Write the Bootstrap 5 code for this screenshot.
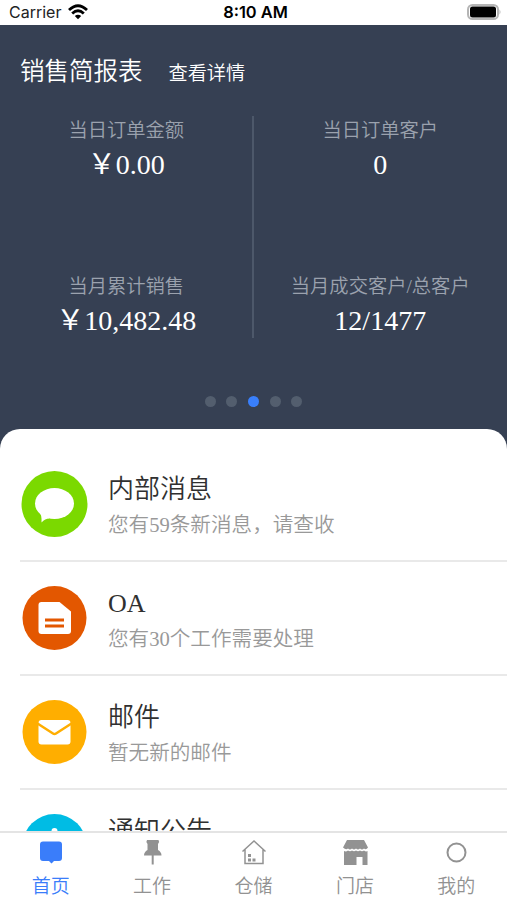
<!DOCTYPE html>
<html lang="zh-CN">
<head>
<meta charset="utf-8">
<meta name="viewport" content="width=device-width, initial-scale=1">
<title>首页</title>
<link href="https://cdn.jsdelivr.net/npm/bootstrap@5.3.0/dist/css/bootstrap.min.css" rel="stylesheet">
<style>
body{font-family:"Liberation Serif","Noto Sans CJK SC",sans-serif;font-weight:350;height:900px;line-height:1}
.statusbar{height:25px;font-family:Inter,"Liberation Sans",sans-serif;font-weight:400;color:#222;padding:0 5px 1px 9px;font-size:16px}
.statusbar>*{flex:1 1 0}
.carrier{gap:7px}
.clock{font-weight:600;font-size:16.4px;color:#000}
.report{background:#364053;height:425px;color:#fff;flex:none}
.report-head{height:91px;padding:3px 0 0 20px;gap:26px}
.report-title{font-size:24.5px;line-height:30px}
.report-link{font-size:19.2px;line-height:30px;padding-top:3px;color:#fff}
.stats{height:222px}
.stats .half{padding-top:1px}
.stats .half:first-child{border-right:2px solid #4d586a;padding-left:1px}
.metric{height:156px}
.metric-label{font-size:19.3px;line-height:28px;color:#9ba2ae}
.metric-value{font-size:28px;line-height:40px;font-weight:400}
.dots{gap:10.6px;margin-top:58px}
.dots i{width:11px;height:11px;border-radius:50%;background:#535e6e}
.dots i.on{background:#397ffb}
.sheet{margin-top:-21px;border-radius:20px 20px 0 0;background:#fff;padding:19px 0 0 20px;overflow:hidden;min-height:0}
.entry{height:114px;gap:20px;border-bottom:2px solid #e9e9e9;flex:none}
.entry svg{flex:none}
.entry-text{padding-top:6px}
.entry-title{font-size:26px;line-height:36px;color:#303030}
.entry-note{font-size:20.6px;line-height:34px;min-height:34px;color:#999}
.tabs{height:69px;border-top:2px solid #e4e4e4;flex:none;background:#fff;color:#929292}
.tabs a{color:inherit;font-size:19px;line-height:31px}
.tabs svg{flex:none}
.tabs a.on{color:#3a7dfa}
</style>
<script src="https://cdn.jsdelivr.net/npm/bootstrap@5.3.0/dist/js/bootstrap.bundle.min.js"></script>
</head>
<body class="d-flex flex-column overflow-hidden bg-white">
<header class="statusbar d-flex align-items-center flex-shrink-0">
  <div class="carrier d-flex align-items-center"><span>Carrier</span>
    <svg width="20" height="16" viewBox="0 0 20 16" fill="none" stroke="#000" stroke-width="2.800"><path d="M1 6Q10-2.500 19 6M4.200 9.500Q10 4 15.800 9.500"/><path d="M6.800 12Q10 9.300 13.200 12L10 15.200Z" fill="#000" stroke="none"/></svg>
  </div>
  <div class="clock text-center">8:10 AM</div>
  <div class="d-flex justify-content-end"><svg width="35" height="17" viewBox="0 0 35 17"><rect x="1" y="1" width="30" height="14" rx="4.500" fill="#fff" stroke="#b5b5b5" stroke-width="2"/><rect x="3" y="2.500" width="26" height="11" rx="2.500"/><path d="M32.500 5.500q2 2.500 0 5z" fill="#b5b5b5"/></svg></div>
</header>
<section class="report">
  <div class="report-head d-flex align-items-center"><span class="report-title">销售简报表</span><a class="report-link text-decoration-none">查看详情</a></div>
  <div class="stats d-flex">
    <div class="half w-50 text-center">
      <div class="metric"><div class="metric-label">当日订单金额</div><div class="metric-value">￥0.00</div></div>
      <div class="metric"><div class="metric-label">当月累计销售</div><div class="metric-value">￥10,482.48</div></div>
    </div>
    <div class="half w-50 text-center">
      <div class="metric"><div class="metric-label">当日订单客户</div><div class="metric-value">0</div></div>
      <div class="metric"><div class="metric-label">当月成交客户/总客户</div><div class="metric-value">12/1477</div></div>
    </div>
  </div>
  <div class="dots d-flex justify-content-center"><i></i><i></i><i class="on"></i><i></i><i></i></div>
</section>
<main class="sheet flex-grow-1">
  <div class="entry d-flex align-items-center">
    <svg width="68" height="68" viewBox="0 0 68 68"><circle cx="34.500" cy="34" r="33" fill="#7bd900"/><ellipse cx="34.500" cy="33.500" rx="19.500" ry="15.500" fill="#fff"/><path d="M19 41q3 4 2.500 11.500 3.500-4 8-4z" fill="#fff"/></svg>
    <div class="entry-text"><div class="entry-title">内部消息</div><div class="entry-note">您有59条新消息，请查收</div></div>
  </div>
  <div class="entry d-flex align-items-center">
    <svg width="68" height="68" viewBox="0 0 68 68"><circle cx="34.500" cy="34" r="32" fill="#e35700"/><path d="M21.500 18h18L51 27.500V47q0 3-3 3H21.500q-3 0-3-3V21q0-3 3-3z" fill="#fff"/><path d="M25 36h19M25 42h19" stroke="#e35700" stroke-width="3"/></svg>
    <div class="entry-text"><div class="entry-title">OA</div><div class="entry-note">您有30个工作需要处理</div></div>
  </div>
  <div class="entry d-flex align-items-center">
    <svg width="68" height="68" viewBox="0 0 68 68"><circle cx="34.500" cy="34" r="32" fill="#ffae00"/><rect x="18.500" y="22" width="32" height="24.500" rx="3" fill="#fff"/><path d="M17.500 25.500L33 35.500q1.500 1 3 0L51.500 25.500" fill="none" stroke="#ffae00" stroke-width="2.500"/></svg>
    <div class="entry-text"><div class="entry-title">邮件</div><div class="entry-note">暂无新的邮件</div></div>
  </div>
  <div class="entry d-flex align-items-center">
    <svg width="68" height="68" viewBox="0 0 68 68"><circle cx="34.500" cy="34" r="32" fill="#00bce4"/><path d="M31.500 19a3 3 0 0 1 6 0q7 3 7 11v9l3 4h-26l3-4v-9q0-8 7-11z" fill="#fff"/></svg>
    <div class="entry-text"><div class="entry-title">通知公告</div><div class="entry-note"></div></div>
  </div>
</main>
<nav class="tabs d-flex">
  <a class="on w-100 d-flex flex-column align-items-center text-decoration-none"><svg width="40" height="38" viewBox="0 0 40 38"><path d="M12 8.500h16q3 0 3 3V25q0 3-3 3h-5L20.500 30.500 18 28h-6q-3 0-3-3V11.500q0-3 3-3z" fill="currentColor"/></svg>首页</a>
  <a class="w-100 d-flex flex-column align-items-center text-decoration-none"><svg width="40" height="38" viewBox="0 0 40 38"><path d="M15 7h11.500q1.500 2-.5 4v6q3.500 2 3.500 5.500H12Q12 19 15.500 17v-6q-2-2-.5-4z" fill="currentColor"/><path d="M20.700 22v9.500" stroke="currentColor" stroke-width="2"/></svg>工作</a>
  <a class="w-100 d-flex flex-column align-items-center text-decoration-none"><svg width="40" height="38" viewBox="0 0 40 38" fill="none" stroke="currentColor" stroke-width="1.500"><path d="M8.500 18.500L20 8l11.500 10.500M11 16.500v14h18v-14"/><path d="M14 22.500h3M14 27h3M18.500 27h3" stroke-width="3"/></svg>仓储</a>
  <a class="w-100 d-flex flex-column align-items-center text-decoration-none"><svg width="40" height="38" viewBox="0 0 40 38" fill="currentColor"><path d="M12 7h17l4 7.500q-2 3-4 1-2 2-4 0-2 2-4 0-2 2-4 0-2 2-4 0-2 2-5-1zM9 18q2 1 4-.5 2 1.500 4 0 2 1.500 4 0 2 1.500 4 0 2 1.500 4 0 2 1.500 3.500.5V32H27.500v-8H21.500v8H9z"/></svg>门店</a>
  <a class="w-100 d-flex flex-column align-items-center text-decoration-none"><svg width="40" height="38" viewBox="0 0 40 38"><circle cx="20.500" cy="19.500" r="9" fill="none" stroke="currentColor" stroke-width="2"/></svg>我的</a>
</nav>
</body>
</html>
